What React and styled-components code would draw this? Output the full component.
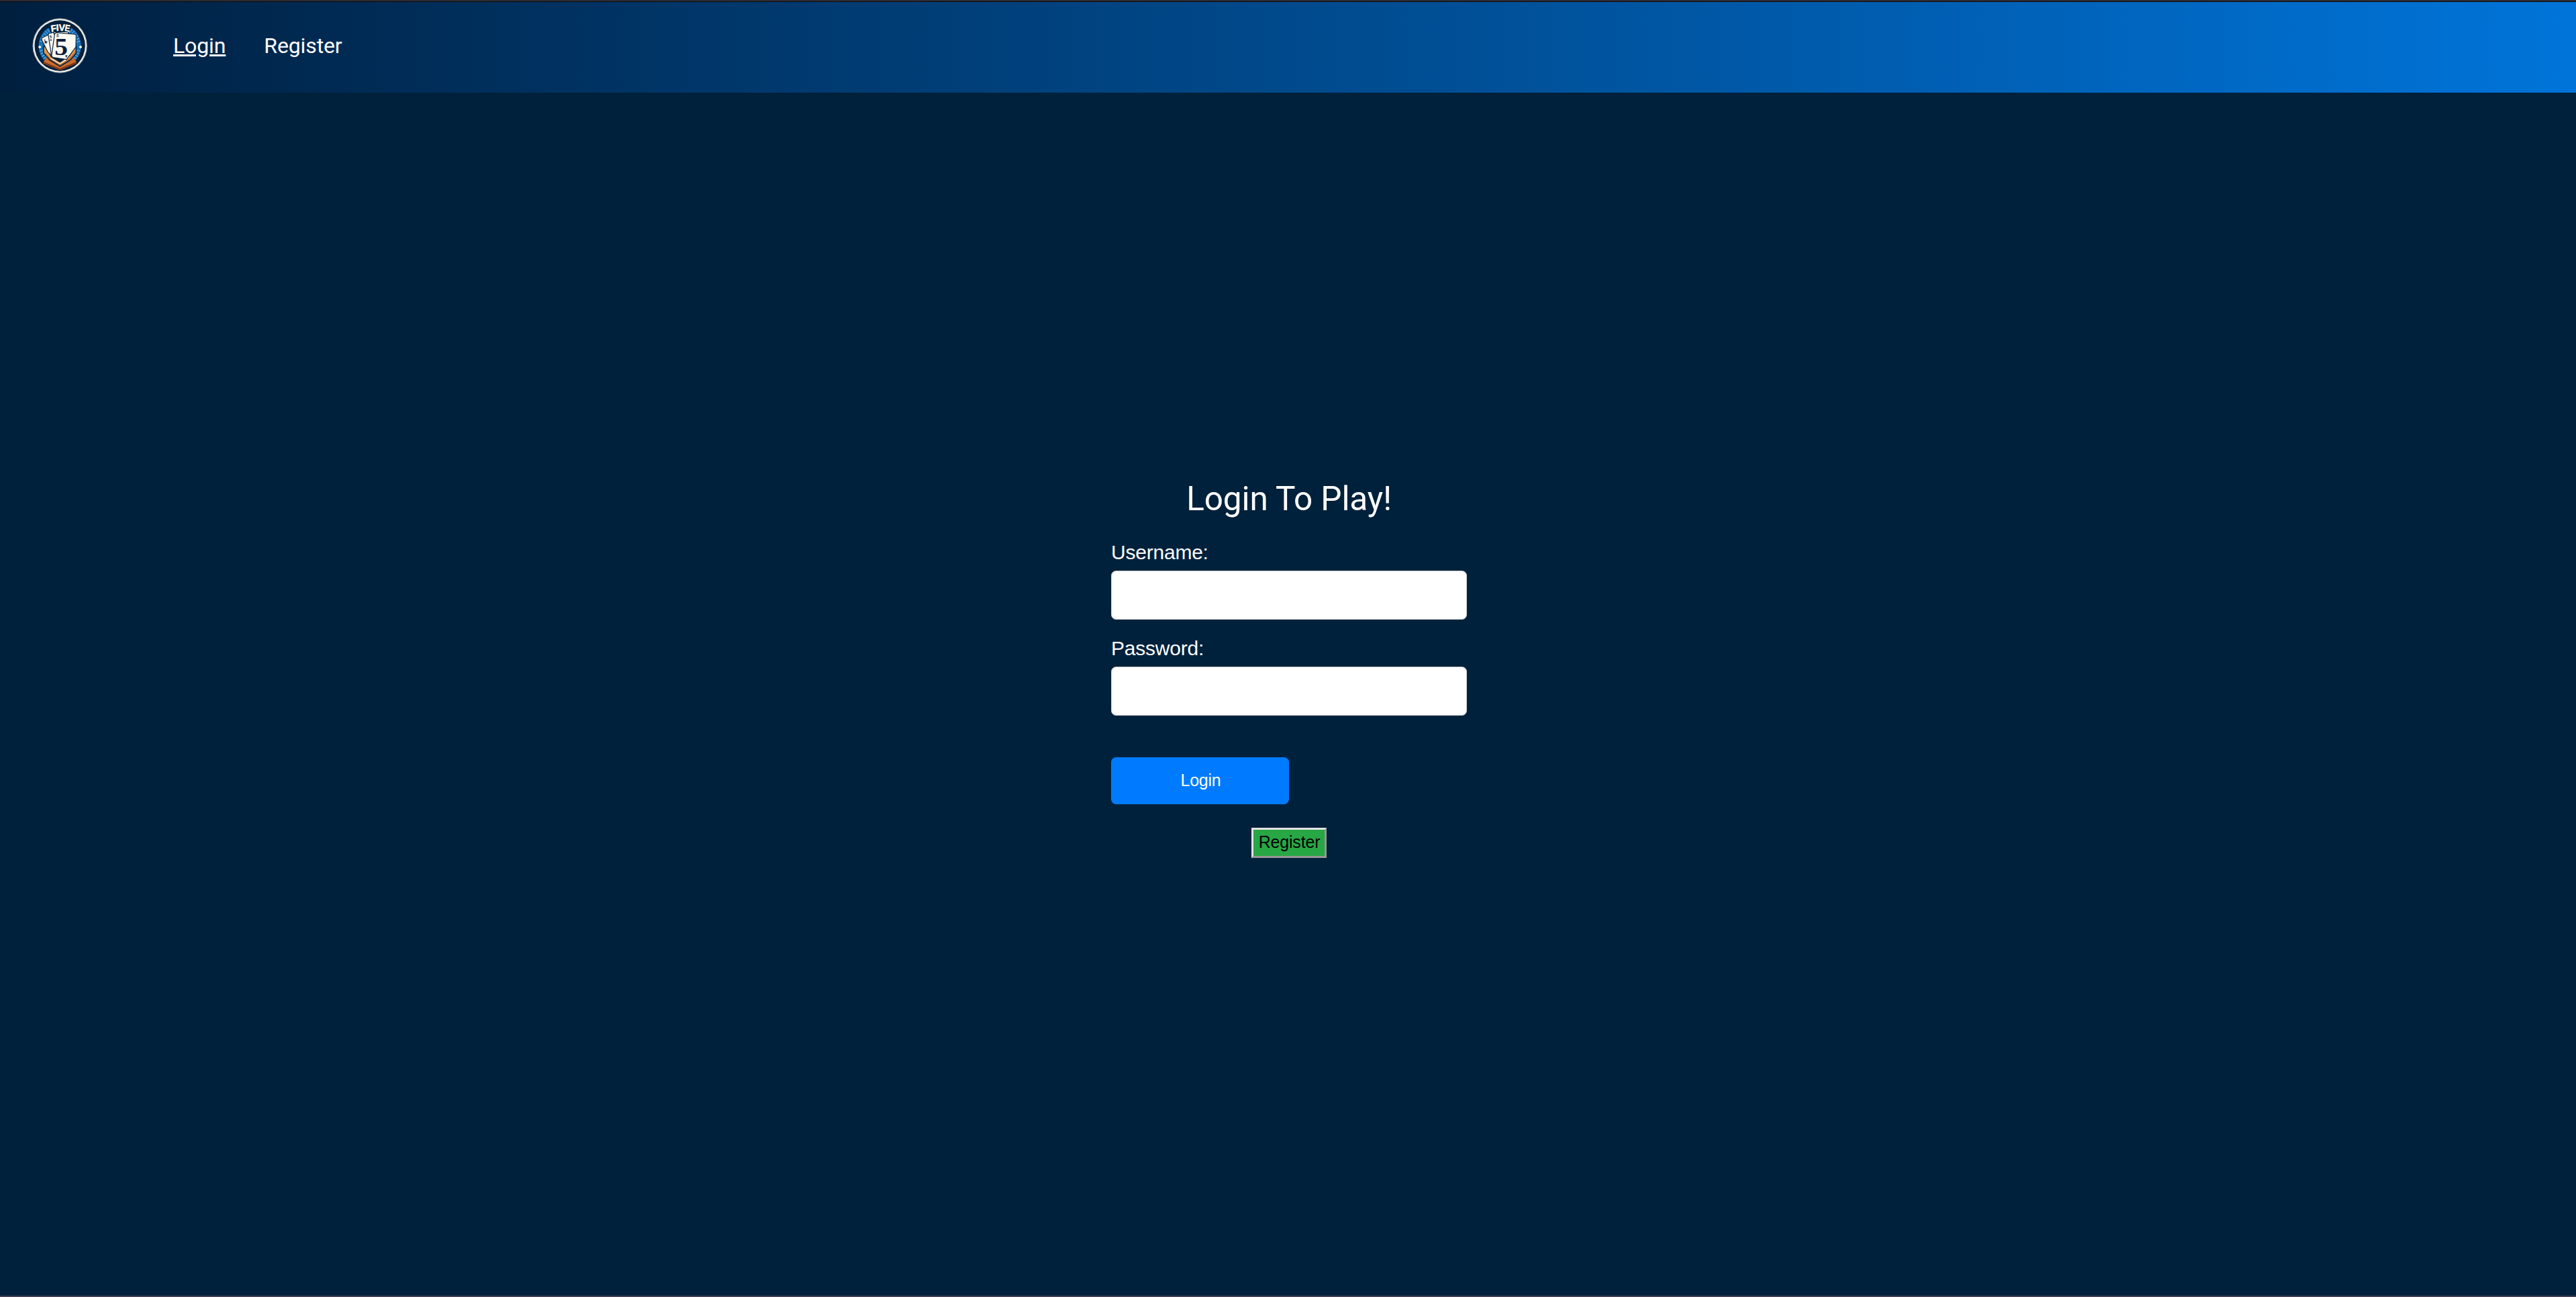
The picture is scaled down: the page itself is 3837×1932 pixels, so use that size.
import React from "react";
import styled, { createGlobalStyle } from "styled-components";

const GlobalStyle = createGlobalStyle`
  html, body, #root { height: 100%; }
  body {
    margin: 0;
    background: #00213b;
    color: #fff;
    font-family: Roboto, "Liberation Sans", sans-serif;
    overflow: hidden;
  }
  * { box-sizing: border-box; }
`;

const Page = styled.div`
  display: flex;
  flex-direction: column;
  height: 100%;
  border-top: 2px solid #2b2a33;
  border-bottom: 2px solid #403f55;
`;

const Navbar = styled.nav`
  display: flex;
  align-items: center;
  flex: none;
  height: 136px;
  padding: 0 47px;
  border-top: 1px solid #0c0c0d;
  background: linear-gradient(to right, #001f3f, #0074d9);
`;

const LogoLink = styled.a`
  display: block;
  width: 84px;
  height: 84px;
  margin: -5px 127px 0 0;
  svg { display: block; width: 100%; height: 100%; }
`;

const NavLinks = styled.div`
  display: flex;
  gap: 57px;
  margin-top: -6px;
`;

const NavLink = styled.a`
  color: #fff;
  font-size: 32px;
  line-height: 38px;
  letter-spacing: -0.12px;
  text-decoration: ${(p) => (p.$active ? "underline" : "none")};
`;

const Main = styled.main`
  display: flex;
  flex: 1;
  flex-direction: column;
  align-items: center;
  padding: 576px 0 0 3px;
`;

const Title = styled.h1`
  margin: 0 0 30px;
  font-size: 49.5px;
  line-height: 58px;
  font-weight: 400;
  letter-spacing: -0.1px;
`;

const Form = styled.form`
  display: flex;
  flex-direction: column;
  width: 530px;
  font-family: "Liberation Sans", Arial, sans-serif;
`;

const Field = styled.label`
  display: flex;
  flex-direction: column;
  gap: 6px;
  margin-bottom: 22px;
  font-size: 30px;
  line-height: 42px;
  letter-spacing: -0.22px;
`;

const Input = styled.input`
  height: 73px;
  padding: 15px;
  border: 1px solid #ccc;
  border-radius: 7.5px;
  background: #fff;
  font-size: 24px;
`;

const SubmitButton = styled.button`
  width: 265px;
  height: 70px;
  margin: 40px 0 35px;
  padding: 0 0 2px 2px;
  border: 0;
  border-radius: 7.5px;
  background: #007bff;
  color: #fff;
  font: 25px "Liberation Sans", Arial, sans-serif;
  letter-spacing: -0.25px;
`;

const RegisterButton = styled.button`
  width: 112px;
  height: 45px;
  padding: 0 0 2px 1px;
  border: 3px solid;
  border-color: #e3e3e3 #979797 #979797 #e3e3e3;
  background: #28a745;
  color: #000;
  font: 25px "Liberation Sans", Arial, sans-serif;
  letter-spacing: -0.18px;
`;

const rays = [-62, -54, -46, -38, -30, -22, -14, 14, 22, 30, 38, 46, 54];

function Logo() {
  return (
    <svg viewBox="51 48 252 252" role="img">
      <circle cx="177.5" cy="174" r="122" fill="#a7b2b7" />
      <circle cx="177.5" cy="174" r="118.5" fill="#f5f4ec" />
      <circle cx="177.5" cy="174" r="113" fill="#06203c" />
      <path d="M127 94A96 96 0 0 0 108 240L177 178Z" fill="#146fb9" />
      <path d="M228 94A96 96 0 0 1 247 240L178 178Z" fill="#146fb9" />
      <g stroke="#8cc5e4" strokeWidth="2.5">
        {rays.map((a) => (
          <g key={a}>
            <path d="M84 176h22" transform={`rotate(${-a} 177.5 176)`} />
            <path d="M249 176h22" transform={`rotate(${a} 177.5 176)`} />
          </g>
        ))}
      </g>
      <g fill="#fff">
        <path d="M86 173h4v4h4v6h-4v4h-4v-4h-4v-6h4z" />
        <path d="M268 173h4v4h4v6h-4v4h-4v-4h-4v-6h4z" />
      </g>
      <path d="M109 242L101 254L178 286L255 254L247 242L178 263Z" fill="#96421c" stroke="#06203c" strokeWidth="3" />
      <path d="M122 223L104 246L178 276L252 246L235 223L178 250Z" fill="#c96a2b" />
      <path d="M106 249L178 279L250 249" fill="none" stroke="#6a2c1b" strokeWidth="3" />
      <path d="M104 178L250 176L250 208L224 238L178 266L132 238L105 207Z" fill="#e59a4c" stroke="#06203c" strokeWidth="5" />
      <path d="M111 207L136 235L178 260L222 232L246 202" fill="none" stroke="#a94f22" strokeWidth="3" />
      <path d="M118 188L138 226L178 250L222 220L244 186Z" fill="#06203c" />
      <path d="M136 231L178 255L205 238" fill="none" stroke="#f9f5e9" strokeWidth="4" />
      <g stroke="#06203c" strokeWidth="3.5" strokeLinejoin="round">
        <path d="M98 139Q95 143 97 149L124 203L143 220L130 124Z" fill="#f9f8ef" />
        <path d="M129 119Q125 121 126 127L139 213L154 219L160 113Z" fill="#f9f8ef" />
        <path d="M150 112L214 112L217 122L152 123Z" fill="#f9f8ef" />
        <path d="M163 116L243 123Q252 125 250 134L249 180L207 236L148 227Q139 224 141 215L154 124Q156 116 163 116Z" fill="#fbfaf2" />
      </g>
      <path d="M207 229L201 218L211 216Z" fill="#06203c" />
      <g fill="#06203c" fontFamily="Liberation Sans, sans-serif" fontWeight="700">
        <text x="108" y="165" fontSize="21" transform="rotate(-18 115 158)">♣</text>
        <text x="106" y="154" fontSize="13" transform="rotate(-18 110 150)">2</text>
        <text x="132" y="140" fontSize="18" transform="rotate(-8 138 134)">5</text>
        <text x="133" y="153" fontSize="13">♣</text>
        <text x="162" y="136" fontSize="19" transform="rotate(8 167 130)">5</text>
        <text x="154" y="217" fontSize="106" textLength="59" lengthAdjust="spacingAndGlyphs" fontFamily="Liberation Serif, serif">5</text>
      </g>
      <path d="M130 84Q178 65 226 84L224 110Q178 102 134 114Z" fill="#06203c" />
      <g fill="#fffef5" fontFamily="Liberation Sans, sans-serif" fontWeight="700" fontSize="41" stroke="#fffef5" strokeWidth="1.4">
        <text x="137" y="111" transform="rotate(-9 148 96)">F</text>
        <text x="161" y="108" transform="rotate(-3 167 95)">I</text>
        <text x="173" y="108" transform="rotate(2 186 95)">V</text>
        <text x="200" y="110" textLength="23" lengthAdjust="spacingAndGlyphs" transform="rotate(9 211 97)">E</text>
      </g>
    </svg>
  );
}

export default function App() {
  return (
    <>
      <GlobalStyle />
      <Page>
        <Navbar>
          <LogoLink><Logo /></LogoLink>
          <NavLinks>
            <NavLink $active>Login</NavLink>
            <NavLink>Register</NavLink>
          </NavLinks>
        </Navbar>
        <Main>
          <Title>Login To Play!</Title>
          <Form onSubmit={(e) => e.preventDefault()}>
            <Field>Username:<Input type="text" /></Field>
            <Field>Password:<Input type="password" /></Field>
            <SubmitButton type="submit">Login</SubmitButton>
          </Form>
          <RegisterButton type="button">Register</RegisterButton>
        </Main>
      </Page>
    </>
  );
}
